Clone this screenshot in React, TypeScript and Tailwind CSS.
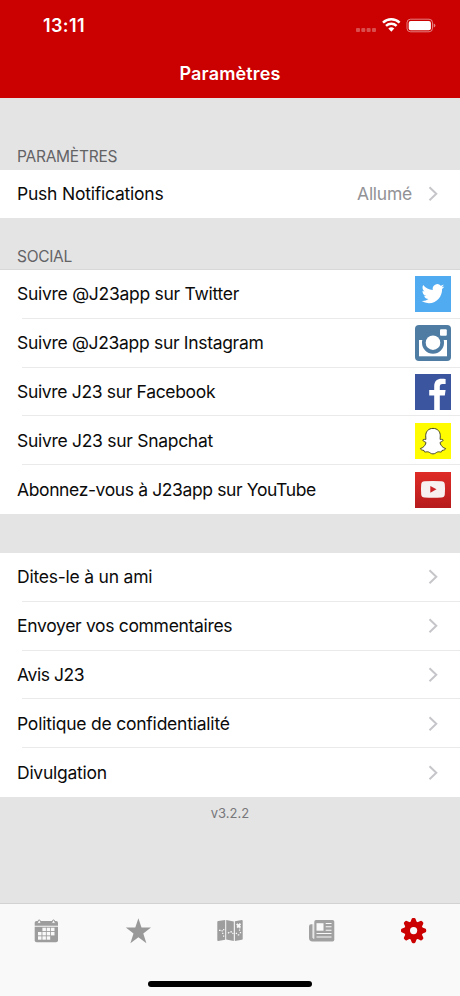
import type { ReactNode } from "react";

function Chevron() {
  return (
    <svg className="mr-[21px] shrink-0" width="12" height="16" viewBox="0 0 12 16" fill="none" stroke="#c6c6ca" strokeWidth="2">
      <path d="M2.5 1.2 9.3 7.700l-6.800 6.500" />
    </svg>
  );
}

function Twitter() {
  return (
    <svg width="36" height="36" viewBox="0 0 36 36">
      <rect width="36" height="36" fill="#50abf1" />
      <path transform="translate(6.6 5.9) scale(.95 .98)" fill="#fff" d="M23.953 4.57a10 10 0 01-2.825.775 4.958 4.958 0 002.163-2.723c-.951.555-2.005.959-3.127 1.184a4.92 4.92 0 00-8.384 4.482C7.69 8.095 4.067 6.13 1.64 3.162a4.822 4.822 0 00-.666 2.475c0 1.71.87 3.213 2.188 4.096a4.904 4.904 0 01-2.228-.616v.06a4.923 4.923 0 003.946 4.827 4.996 4.996 0 01-2.212.085 4.936 4.936 0 004.604 3.417 9.867 9.867 0 01-6.102 2.105c-.39 0-.779-.023-1.17-.067a13.995 13.995 0 007.557 2.209c9.053 0 13.998-7.496 13.998-13.985 0-.21 0-.42-.015-.63A9.935 9.935 0 0024 4.59z" />
    </svg>
  );
}

function Instagram() {
  return (
    <svg width="36" height="36" viewBox="0 0 36 36">
      <rect width="36" height="36" rx="4" fill="#4e7ca3" />
      <rect x="4" y="15" width="28" height="16.300" fill="#fff" />
      <circle cx="18" cy="17.700" r="11" fill="#4e7ca3" />
      <circle cx="18" cy="17.700" r="7.300" fill="#fff" />
      <rect x="25" y="4.200" width="6.800" height="6.600" rx="1" fill="#fff" />
    </svg>
  );
}

function Facebook() {
  return (
    <svg width="36" height="36" viewBox="0 0 36 36">
      <rect width="36" height="36" fill="#3b559f" />
      <path d="M19.2 36V21.5h-5V16h5v-3.8c0-5 3-7.4 7.4-7.4 2 0 3.4.1 4 .2v5h-3c-2.3 0-2.8 1.1-2.8 2.8V16h5.8l-.8 5.5h-5V36Z" fill="#fff" />
    </svg>
  );
}

function Snapchat() {
  return (
    <svg width="36" height="36" viewBox="0 0 36 36">
      <rect width="36" height="36" fill="#fffc00" />
      <path d="M18 5.4c4.500 0 7.300 3.100 7.300 7.400 0 1.300-.1 2.500-.2 3.600.8.4 1.800-.5 2.700.2.9.9-.3 1.700-2.500 2.600-.7.5.5 2.900 1.800 4.300 1 1.100 2.200 1.700 3.500 2-.1 1.300-1.700 1.600-3.600 2-.4.4-.2 1.200-.7 1.500-1 .2-2.300-.5-3.900 0-1.400.5-2.200 1.900-4.400 1.900s-3-1.400-4.400-1.900c-1.600-.5-2.900.2-3.900 0-.5-.3-.3-1.100-.7-1.500-1.900-.4-3.500-.7-3.600-2 1.300-.3 2.500-.9 3.500-2 1.300-1.400 2.500-3.800 1.800-4.300-2.200-.9-3.400-1.700-2.500-2.600.9-.7 1.900.2 2.700-.2-.1-1.100-.2-2.300-.2-3.600 0-4.300 2.800-7.400 7.300-7.400Z" fill="#fff" stroke="#44442e" strokeWidth="1" strokeLinejoin="round" />
    </svg>
  );
}

function YouTube() {
  return (
    <svg width="36" height="36" viewBox="0 0 36 36">
      <defs>
        <linearGradient id="yt" x1="0" y1="0" x2="0" y2="1">
          <stop offset="0" stopColor="#df2c27" />
          <stop offset="1" stopColor="#b61b1d" />
        </linearGradient>
      </defs>
      <rect width="36" height="36" fill="url(#yt)" />
      <path d="M9.500 9.300Q18 8.700 26.500 9.300q3 .2 3.300 3 .5 5 0 10.200-.3 2.800-3.300 3-8.500.6-17 0-3-.2-3.300-3-.5-5.200 0-10.200.3-2.800 3.300-3Z" fill="#f7f1f1" />
      <path d="M15.300 13.900v6.800l6.200-3.400Z" fill="#cc2326" />
    </svg>
  );
}

const CELLS = [
  [9.4, 9.7], [13.7, 9.7], [18, 9.7],
  [5, 14], [9.4, 14], [13.7, 14], [18, 14],
  [5, 18.3], [9.4, 18.3], [13.7, 18.3],
];

function CalendarIcon() {
  return (
    <svg width="26" height="26" viewBox="0 0 26 26" fill="#9d9d9d">
      <path d="M3.500 3h19.700q1.800 0 1.800 1.800v2.900H1.700V4.800Q1.700 3 3.500 3Z" />
      <path d="M1.700 8.700H25v13.600q0 2-2 2H3.700q-2 0-2-2Z" />
      <path d="M4.200 5.400 5.600 2h1.200l1.400 3.400ZM18.500 5.400 19.900 2h1.200l1.400 3.400Z" fill="#f9f9f9" stroke="#9d9d9d" strokeWidth="1" />
      {CELLS.map(([x, y]) => (
        <rect key={`${x}-${y}`} x={x} y={y} width="3.5" height="3.4" fill="#f9f9f9" />
      ))}
    </svg>
  );
}

function StarIcon() {
  return (
    <svg width="26" height="26" viewBox="0 0 26 26" fill="#999">
      <path d="m13.400 .2 3.100 9.300h9.500l-7.700 5.900 3.100 9.800-8-6-8 6 3.100-9.800L.8 9.500h9.500Z" />
    </svg>
  );
}

function MapIcon() {
  return (
    <svg width="26" height="26" viewBox="0 0 26 26">
      <g fill="#9d9d9d">
        <path d="M1.200 3 8.200 2v19.800l-7 1.100Q.3 23 .3 22V4q0-.9.900-1Z" />
        <path d="m9.200 2 7.600 1.500V23l-7.600-1.500Z" />
        <path d="m17.900 3.300 6.900-1.300q.9 0 .9 1v17.800q0 .8-.8 1l-7 1.300Z" />
      </g>
      <g stroke="#f9f9f9" strokeWidth="1.200" fill="none">
        <path d="M2 12.300h1.600m.9.500h1.300m-.7 2.500h1.300m-.4 2.800h1.200M6.700 11v1.200M11 15.300l1.300-1.100m1-.3h1.700m.4 1.100 1 .9M18.800 15.600l1.200-.5m.8 1.700h1.500m.5-2.100h1.300m-2.200-2.500h1.300m-.9-2.400h1.100" />
        <path d="m19.700 6 3.700 3.400m0-3.700-3.200 3.900" strokeWidth="1.900" />
      </g>
    </svg>
  );
}

function NewsIcon() {
  return (
    <svg width="26" height="26" viewBox="0 0 26 26">
      <path d="M7 2h16.500q1.800 0 1.800 1.800v17.900q0 1.700-1.800 1.700H3.500Q0 23.400 0 20V8.500Q0 6.300 2 6.300h2.300v13.900q0 .8.500.8t.5-.8V3.700Q5.300 2 7 2Z" fill="#a1a1a1" />
      <path d="M3.900 6v14" stroke="#f9f9f9" strokeWidth=".8" />
      <path d="M7.500 5.200h7v7.500h-7Z" fill="#f9f9f9" />
      <path d="M16.700 5.500h5.800M16.700 8.800h5.800M16.700 12.200h5.800M7.500 15.500h15M7.500 19h15" stroke="#f9f9f9" strokeWidth="1.100" />
    </svg>
  );
}

const TEETH = [0, 45, 90, 135, 180, 225, 270, 315];

function GearIcon() {
  return (
    <svg width="26" height="26" viewBox="-12.6 -12.6 26 26" fill="#cb0000">
      {TEETH.map((angle) => (
        <path key={angle} transform={`rotate(${angle})`} d="M-3.300 -8L-2 -11.500Q-1.700 -12.600 -.7 -12.600H.7Q1.700 -12.600 2 -11.500L3.300 -8Z" />
      ))}
      <circle r="9.4" />
      <circle r="3.600" fill="#f9f9f9" />
    </svg>
  );
}

function Row({ label, tracking, divider = true, children }: { label: string; tracking: string; divider?: boolean; children: ReactNode }) {
  return (
    <div className="relative flex h-[48.8px] items-center pl-[17px]">
      <span className={`flex-1 text-[17.5px] leading-6 whitespace-nowrap text-[#0b0b0b] ${tracking}`}>{label}</span>
      {children}
      {divider && <div className="absolute right-0 bottom-0 left-[22px] h-px bg-[#eaeaeb]" />}
    </div>
  );
}

const SOCIAL = [
  { label: "Suivre @J23app sur Twitter", tracking: "tracking-[-0.27px]", icon: <Twitter /> },
  { label: "Suivre @J23app sur Instagram", tracking: "tracking-[-0.31px]", icon: <Instagram /> },
  { label: "Suivre J23 sur Facebook", tracking: "tracking-[-0.33px]", icon: <Facebook /> },
  { label: "Suivre J23 sur Snapchat", tracking: "tracking-[-0.29px]", icon: <Snapchat /> },
  { label: "Abonnez-vous à J23app sur YouTube", tracking: "tracking-[-0.38px]", icon: <YouTube /> },
];

const LINKS = [
  { label: "Dites-le à un ami", tracking: "tracking-[-0.22px]" },
  { label: "Envoyer vos commentaires", tracking: "tracking-[-0.32px]" },
  { label: "Avis J23", tracking: "tracking-[-0.42px]" },
  { label: "Politique de confidentialité", tracking: "tracking-[-0.22px]" },
  { label: "Divulgation", tracking: "tracking-[-0.25px]" },
];

export default function App() {
  return (
    <div className="flex h-[996px] w-[460px] flex-col overflow-hidden bg-[#e4e4e4] font-['Inter','Liberation_Sans',sans-serif]">
      <header className="h-[98px] shrink-0 bg-[#cb0000] text-white">
        <div className="flex h-[50px] items-center pr-[24px] pl-[43px]">
          <span className="flex-1 pt-[2px] text-[18px] leading-6 font-semibold tracking-[0.4px]">13:11</span>
          <svg width="80" height="18" viewBox="0 0 80 18">
            <g fill="#fff" opacity=".3">
              <rect x="0" y="12" width="4" height="4" rx="1" />
              <rect x="5.300" y="12" width="4" height="4" rx="1" />
              <rect x="10.600" y="12" width="4" height="4" rx="1" />
              <rect x="16" y="12" width="4" height="4" rx="1" />
            </g>
            <g fill="none" stroke="#fff" strokeWidth="2.500">
              <path d="M27 6.600a12.200 12.200 0 0 1 16.600 0" />
              <path d="M30 9.900a7.900 7.900 0 0 1 10.600 0" />
            </g>
            <path d="M32.300 12.500a4.600 4.600 0 0 1 6 0L35.300 15.700Z" fill="#fff" />
            <rect x="51" y="3.200" width="25.500" height="12.600" rx="3.500" fill="none" stroke="#fff" strokeOpacity=".5" />
            <rect x="52.700" y="4.900" width="22.200" height="9.300" rx="2" fill="#fff" />
            <path d="M77.700 7.500q1.700.7 1.700 2t-1.700 2Z" fill="#fff" opacity=".5" />
          </svg>
        </div>
        <h1 className="text-center text-[18px] leading-[48px] font-semibold tracking-[0.15px]">Paramètres</h1>
      </header>

      <main className="flex-1">
        <h2 className="h-[72px] pt-[47px] pl-[17px] text-[15.5px] leading-6 tracking-[-0.25px] text-[#636366]">PARAMÈTRES</h2>
        <section className="h-[47.5px] bg-white">
          <Row label="Push Notifications" tracking="tracking-[-0.22px]" divider={false}>
            <span className="mr-[15px] text-[17.5px] leading-6 tracking-[-0.25px] text-[#929296]">Allumé</span>
            <Chevron />
          </Row>
        </section>
        <h2 className="h-[52.5px] border-b border-[#d8d8d8] pt-[27.5px] pl-[17px] text-[15.5px] leading-6 tracking-[-0.3px] text-[#636366]">SOCIAL</h2>
        <section className="bg-white">
          {SOCIAL.map(({ label, tracking, icon }, i) => (
            <Row key={label} label={label} tracking={tracking} divider={i < 4}>
              <span className="mr-[9px]">{icon}</span>
            </Row>
          ))}
        </section>
        <div className="h-[39px]" />
        <section className="bg-white">
          {LINKS.map(({ label, tracking }, i) => (
            <Row key={label} label={label} tracking={tracking} divider={i < 4}>
              <Chevron />
            </Row>
          ))}
        </section>
        <p className="pt-[6px] text-center text-[13px] leading-5 text-[#77777a]">v3.2.2</p>
      </main>

      <footer className="flex h-[93px] shrink-0 flex-col items-center justify-between border-t border-[#d2d2d2] bg-[#f9f9f9] pb-[9px]">
        <nav className="grid w-full grid-cols-5 justify-items-center pt-[14px]">
          <CalendarIcon />
          <StarIcon />
          <MapIcon />
          <NewsIcon />
          <GearIcon />
        </nav>
        <div className="h-[6px] w-[164px] rounded-full bg-black" />
      </footer>
    </div>
  );
}
